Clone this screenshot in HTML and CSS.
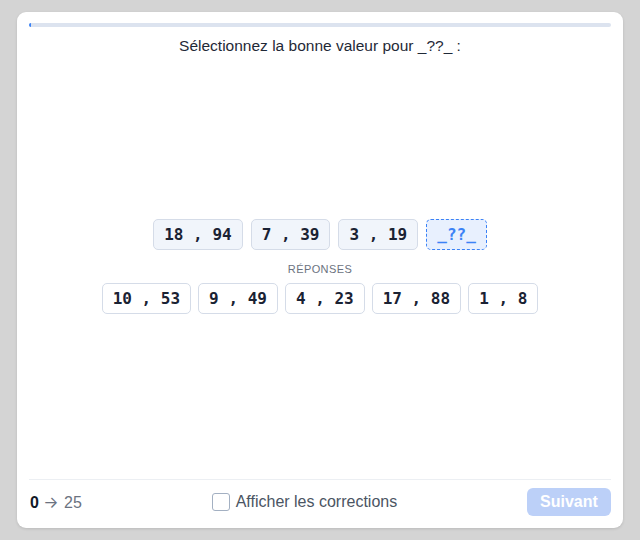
FILE: index.html
```html
<!DOCTYPE html>
<html lang="fr">
<head>
<meta charset="utf-8">
<title>Quiz</title>
<link rel="stylesheet" href="styles.css">
</head>
<body>
<div class="card">
  <div class="progress"><div class="progress-fill"></div></div>
  <div class="title">Sélectionnez la bonne valeur pour _??_ :</div>
  <div class="main">
    <div class="row row-seq">
      <span class="chip chip-seq">18 , 94</span>
      <span class="chip chip-seq">7 , 39</span>
      <span class="chip chip-seq">3 , 19</span>
      <span class="chip chip-blank">_??_</span>
    </div>
    <div class="label">Réponses</div>
    <div class="row row-ans">
      <span class="chip chip-ans">10 , 53</span>
      <span class="chip chip-ans">9 , 49</span>
      <span class="chip chip-ans">4 , 23</span>
      <span class="chip chip-ans">17 , 88</span>
      <span class="chip chip-ans">1 , 8</span>
    </div>
  </div>
  <div class="footer">
    <div class="score"><b>0</b> <span class="arrow">→</span> <span class="total">25</span></div>
    <label class="check"><span class="box"></span>Afficher les corrections</label>
    <button class="next">Suivant</button>
  </div>
</div>
</body>
</html>
```
FILE: styles.css
```css
html, body {
  margin: 0;
  padding: 0;
  background: #d4d4d4;
}
body {
  padding: 12px 17px;
  font-family: "Liberation Sans", Arial, sans-serif;
}
.card {
  width: 606px;
  height: 516px;
  box-sizing: border-box;
  background: #ffffff;
  border-radius: 9px;
  box-shadow: 0 1px 3px rgba(0,0,0,0.12);
  padding: 11px 12px 12px;
  display: flex;
  flex-direction: column;
}
.progress {
  height: 4px;
  background: #dce3ef;
  border-radius: 2px;
  overflow: hidden;
}
.progress-fill {
  width: 2px;
  height: 100%;
  background: #3b82f6;
}
.title {
  margin-top: 9px;
  text-align: center;
  font-size: 15.5px;
  line-height: 20px;
  color: #1f2937;
}
.main {
  flex: 1;
  display: flex;
  flex-direction: column;
  align-items: center;
  justify-content: center;
  padding-bottom: 3px;
}
.row {
  display: flex;
  justify-content: center;
}
.row-seq { gap: 8px; }
.row-ans { gap: 7px; }
.chip {
  box-sizing: border-box;
  height: 31px;
  padding: 0 10px;
  display: inline-flex;
  align-items: center;
  font-family: "DejaVu Sans Mono", "Liberation Mono", monospace;
  font-weight: bold;
  font-size: 16px;
  color: #1a2233;
  border-radius: 5px;
  white-space: pre;
}
.chip-seq {
  background: #f1f5fb;
  border: 1.5px solid #d5dce8;
}
.chip-blank {
  background: #e8f0fe;
  border: 1.5px dashed #3b82f6;
  color: #3b82f6;
}
.chip-ans {
  background: #ffffff;
  border: 1.5px solid #d5dce8;
}
.label {
  margin-top: 13px;
  margin-bottom: 8px;
  font-size: 11px;
  line-height: 12px;
  letter-spacing: 0.4px;
  text-transform: uppercase;
  color: #6b7280;
}
.footer {
  border-top: 1px solid #eceff3;
  padding-top: 8px;
  display: flex;
  justify-content: space-between;
  align-items: center;
}
.score {
  padding-left: 1px;
  font-size: 16px;
  color: #111827;
}
.score b { font-weight: bold; }
.arrow {
  font-family: Inter, "DejaVu Sans", sans-serif;
  font-size: 16px;
  color: #6b7280;
}
.total { color: #6b7280; margin-left: 1px; }
.check {
  display: flex;
  align-items: center;
  gap: 6px;
  font-size: 16px;
  color: #4b5563;
}
.box {
  width: 18px;
  height: 18px;
  box-sizing: border-box;
  border: 1.5px solid #a3b0c2;
  border-radius: 3px;
  background: #fff;
}
.next {
  width: 84px;
  height: 28px;
  border: none;
  border-radius: 6px;
  background: #bcd0f8;
  color: #ffffff;
  font-family: "Liberation Sans", Arial, sans-serif;
  font-weight: bold;
  font-size: 16px;
  padding: 0;
}
```
